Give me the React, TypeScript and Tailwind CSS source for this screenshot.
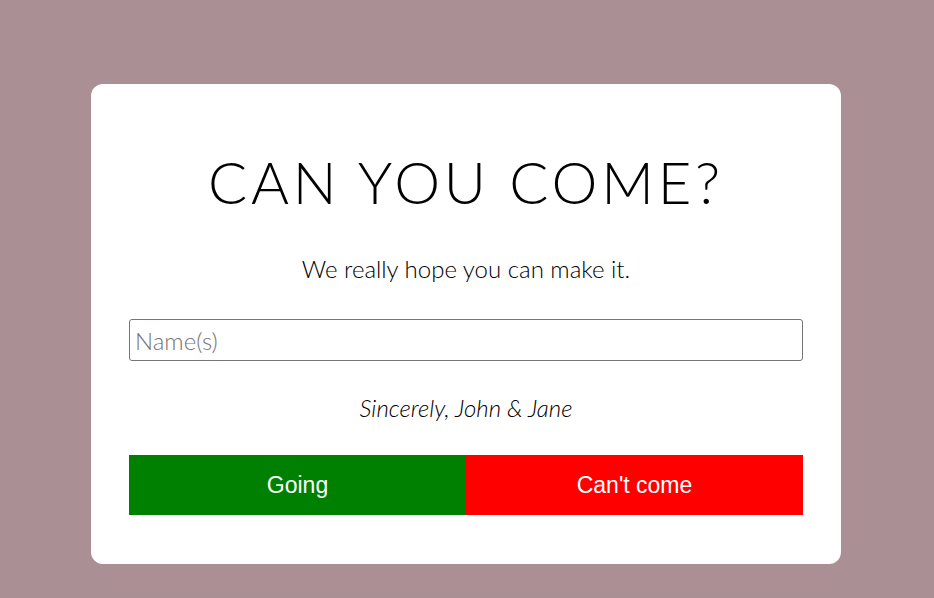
export default function App() {
  return (
    <div className="min-h-screen w-full bg-[#aa9095] flex justify-center pt-[84px] pr-[2px]">
      <div className="w-[750px] h-[480px] bg-white rounded-xl px-[38px] pt-[63px] font-['Lato','Noto_Sans',sans-serif]">
        <h1 className="text-center text-[58px] leading-[70px] font-light tracking-[0.065em] text-black">
          CAN YOU COME?
        </h1>
        <p className="mt-[37px] text-center text-[24px] leading-[30px] font-light text-black">
          We really hope you can make it.
        </p>
        <input
          className="mt-[35px] block w-full h-[42px] border border-[#767676] rounded-[3px] px-[5px] text-[24px] font-light placeholder:text-[#757575] outline-none"
          placeholder="Name(s)"
        />
        <p className="mt-[32px] text-center text-[24px] leading-[30px] italic font-light text-black">
          Sincerely, John &amp; Jane
        </p>
        <div className="mt-[32px] flex h-[60px]">
          <button className="flex-1 bg-[#008000] text-white text-[23px] font-['Liberation_Sans',sans-serif]">
            Going
          </button>
          <button className="flex-1 bg-[#ff0000] text-white text-[23px] font-['Liberation_Sans',sans-serif]">
            Can't come
          </button>
        </div>
      </div>
    </div>
  );
}
